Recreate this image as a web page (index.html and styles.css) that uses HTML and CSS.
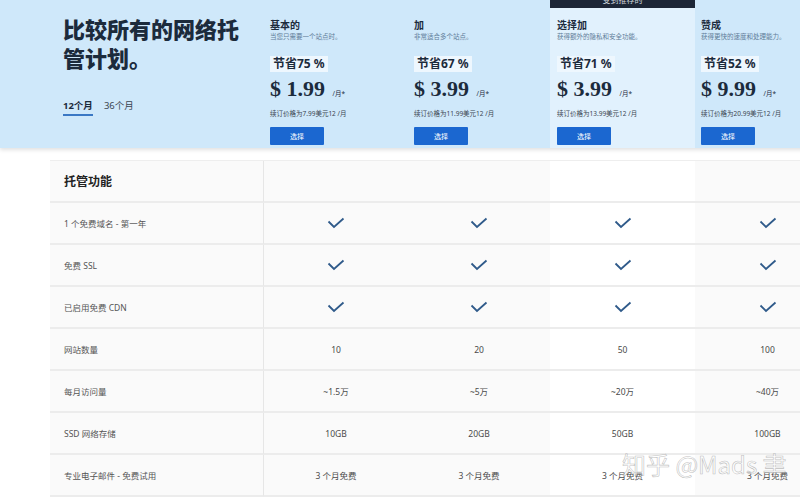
FILE: index.html
```html
<!DOCTYPE html>
<html lang="zh-CN">
<head>
    <meta charset="UTF-8">
    <title>比较所有的网络托管计划</title>
    <link rel="stylesheet" href="styles.css">
</head>
<body>
<div class="page">
    <header class="hero">
        <div class="intro">
            <h1>比较所有的网络托管计划。</h1>
            <div class="tabs">
                <span class="tab active">12个月</span>
                <span class="tab">36个月</span>
            </div>
        </div>

        <div class="plan">
            <div class="plan-name">基本的</div>
            <div class="plan-sub">当您只需要一个站点时。</div>
            <div class="save">节省75 %</div>
            <div class="price">$ 1.99 <small>/月*</small></div>
            <div class="renew">续订价格为7.99美元12 /月</div>
            <button class="select">选择</button>
        </div>

        <div class="plan">
            <div class="plan-name">加</div>
            <div class="plan-sub">非常适合多个站点。</div>
            <div class="save">节省67 %</div>
            <div class="price">$ 3.99 <small>/月*</small></div>
            <div class="renew">续订价格为11.99美元12 /月</div>
            <button class="select">选择</button>
        </div>

        <div class="plan featured">
            <div class="badge">受到推荐的</div>
            <div class="plan-name">选择加</div>
            <div class="plan-sub">获得额外的隐私和安全功能。</div>
            <div class="save">节省71 %</div>
            <div class="price">$ 3.99 <small>/月*</small></div>
            <div class="renew">续订价格为13.99美元12 /月</div>
            <button class="select">选择</button>
        </div>

        <div class="plan">
            <div class="plan-name">赞成</div>
            <div class="plan-sub">获得更快的速度和处理能力。</div>
            <div class="save">节省52 %</div>
            <div class="price">$ 9.99 <small>/月*</small></div>
            <div class="renew">续订价格为20.99美元12 /月</div>
            <button class="select">选择</button>
        </div>
    </header>

    <div class="table" id="table">
        <div class="cell feature head">托管功能</div>
        <div class="cell"></div>
        <div class="cell"></div>
        <div class="cell white"></div>
        <div class="cell"></div>
    </div>

    <div class="watermark">知乎 @Mads 聿</div>
</div>

<script>
    const rows = [
        ["1 个免费域名 - 第一年", "check", "check", "check", "check"],
        ["免费 SSL", "check", "check", "check", "check"],
        ["已启用免费 CDN", "check", "check", "check", "check"],
        ["网站数量", "10", "20", "50", "100"],
        ["每月访问量", "~1.5万", "~5万", "~20万", "~40万"],
        ["SSD 网络存储", "10GB", "20GB", "50GB", "100GB"],
        ["专业电子邮件 - 免费试用", "3 个月免费", "3 个月免费", "3 个月免费", "3 个月免费"]
    ];

    const checkIcon = '<svg class="check" width="18" height="12" viewBox="0 0 18 12"><polyline points="1.5,4.5 7,10 16.5,1.5" fill="none" stroke="currentColor" stroke-width="1.8"/></svg>';
    const table = document.getElementById("table");

    rows.forEach(row => {
        row.forEach((value, i) => {
            const cell = document.createElement("div");
            cell.className = "cell" + (i === 0 ? " feature" : "") + (i === 3 ? " white" : "");
            cell.innerHTML = value === "check" ? checkIcon : value;
            table.appendChild(cell);
        });
    });
</script>
</body>
</html>
```

FILE: styles.css
```css
html, body {
    margin: 0;
    width: 800px;
    height: 500px;
    overflow: hidden;
}
body {
    background: #fff;
    font-family: "Noto Sans", "Noto Sans CJK SC", sans-serif;
    color: #333;
}
.page {
    width: 840px;
    height: 500px;
    overflow: hidden;
    position: relative;
}
.hero {
    display: grid;
    grid-template-columns: 264px 144px 142px 145px 145px;
    height: 148px;
    background: #cfe8fa;
    box-shadow: 0 2px 4px rgba(0, 0, 0, 0.12);
    position: relative;
    z-index: 1;
}
.intro {
    padding: 14px 0 0 63px;
}
h1 {
    margin: 0;
    width: 185px;
    font-family: "Noto Sans CJK SC", sans-serif;
    font-size: 22px;
    line-height: 29px;
    font-weight: 900;
    color: #1c2b3c;
}
.tabs {
    display: flex;
    gap: 11px;
    margin-top: 27px;
}
.tab {
    font-size: 9.5px;
    line-height: 13px;
    padding-bottom: 2px;
    color: #3a4550;
    border-bottom: 2px solid transparent;
}
.tab.active {
    font-weight: 700;
    color: #1c2b3c;
    border-bottom-color: #3b78c4;
}
.plan {
    display: flex;
    flex-direction: column;
    align-items: flex-start;
    padding: 18px 6px 0;
    position: relative;
}
.plan.featured {
    background: #e1f1fd;
    padding-left: 7px;
}
.badge {
    position: absolute;
    top: 0;
    left: 0;
    right: 0;
    height: 8px;
    overflow: hidden;
    background: #1c2636;
    color: #cfd6de;
    font-size: 8px;
    line-height: 0;
    text-align: center;
}
.plan-name {
    font-size: 10px;
    line-height: 14px;
    font-weight: 700;
    color: #1c2b3c;
}
.plan-sub {
    font-size: 6.5px;
    line-height: 10px;
    color: #5f7d99;
    white-space: nowrap;
}
.save {
    margin-top: 14px;
    padding: 0 3px;
    background: #eef7fe;
    font-size: 12px;
    line-height: 16px;
    font-weight: 700;
    color: #1c2b3c;
}
.price {
    margin-top: 6px;
    font-family: "Liberation Serif", serif;
    font-size: 22px;
    line-height: 22px;
    font-weight: 700;
    color: #1c2b3c;
    white-space: nowrap;
}
.price small {
    font-family: "Noto Sans", "Noto Sans CJK SC", sans-serif;
    font-size: 6.5px;
    font-weight: 400;
    margin-left: 2px;
}
.renew {
    margin-top: 4px;
    font-size: 6.5px;
    line-height: 10px;
    color: #3a4550;
    white-space: nowrap;
}
.select {
    margin-top: 8px;
    width: 54px;
    height: 18px;
    padding: 0;
    border: none;
    border-radius: 1px;
    background: #1b67d0;
    color: #fff;
    font-family: "Noto Sans CJK SC", sans-serif;
    font-size: 7px;
}
.table {
    display: grid;
    grid-template-columns: 214px 144px 142px 145px 145px;
    margin: 12px 0 0 50px;
    border-top: 1px solid #eeeeee;
}
.cell {
    height: 42px;
    box-sizing: border-box;
    border-bottom: 2px solid #ececec;
    background: #fafafa;
    display: flex;
    align-items: center;
    justify-content: center;
    font-size: 8.5px;
    color: #4a4a4a;
}
.cell.white {
    background: #fff;
}
.cell.feature {
    justify-content: flex-start;
    padding-left: 14px;
    border-right: 1px solid #e6e6e6;
    color: #555;
}
.cell.feature.head {
    font-size: 12px;
    font-weight: 700;
    color: #222;
}
.check {
    color: #2f5a8a;
}
.watermark {
    position: absolute;
    top: 446px;
    left: 622px;
    font-family: "Noto Sans CJK SC", sans-serif;
    font-size: 24px;
    white-space: nowrap;
    color: rgba(255, 255, 255, 0.6);
    -webkit-text-stroke: 0.6px rgba(150, 150, 150, 0.6);
}
```
